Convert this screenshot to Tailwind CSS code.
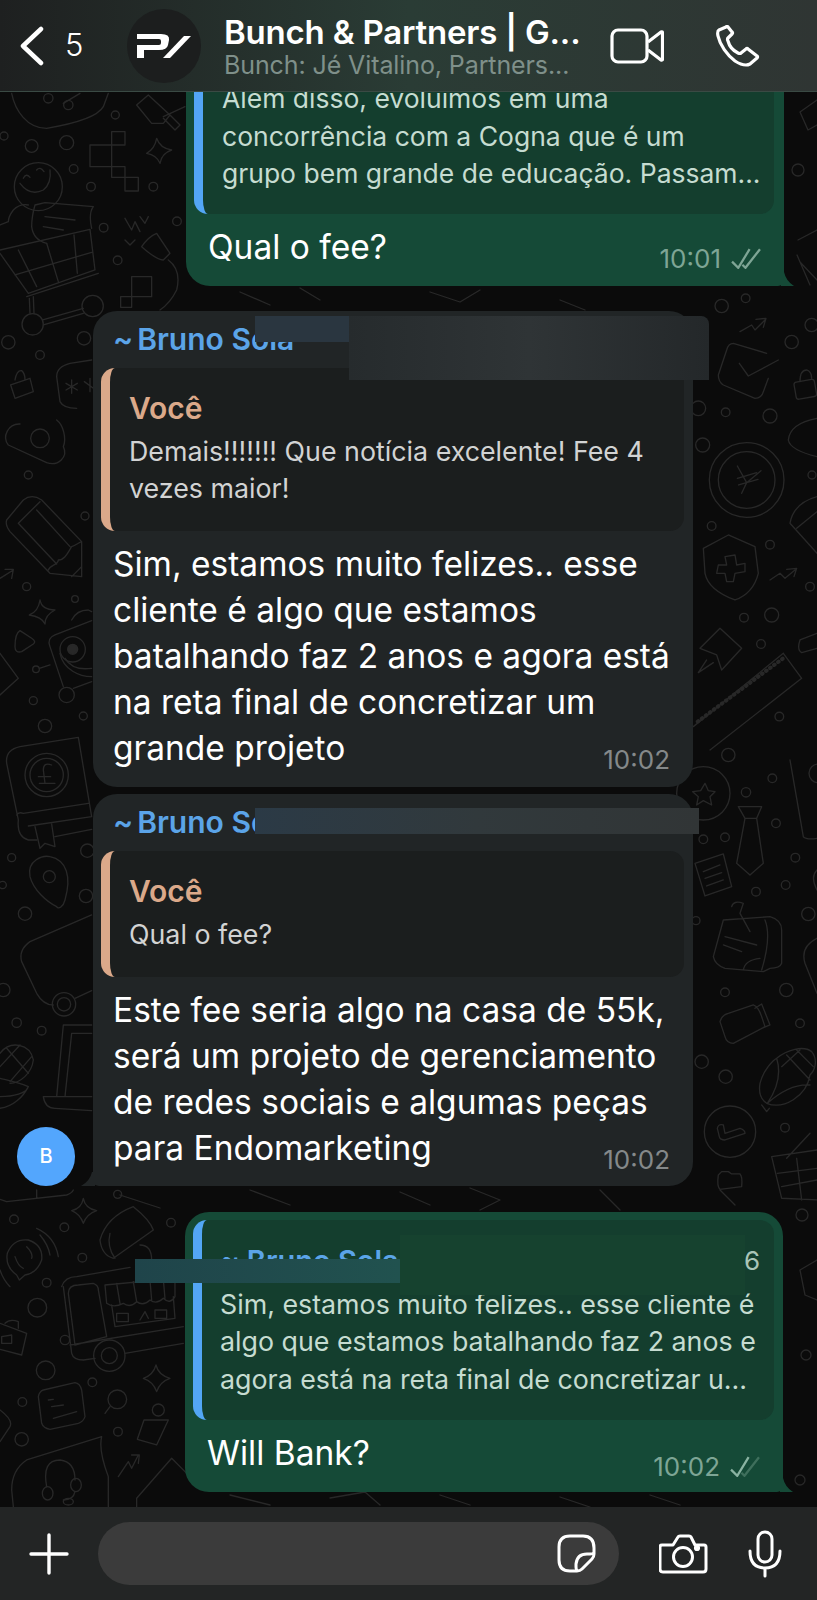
<!DOCTYPE html>
<html lang="pt">
<head>
<meta charset="utf-8">
<script src="https://cdn.jsdelivr.net/npm/@tailwindcss/browser@4"></script>
</head>
<body class="m-0 bg-[#0b0b0b]">
<div class="relative w-[817px] h-[1600px] overflow-hidden flex flex-col bg-[#0b0b0b] font-['Inter','Liberation_Sans',sans-serif] text-white">

  <!-- HEADER -->
  <header class="relative z-20 h-[92px] shrink-0 flex items-center bg-gradient-to-r from-[#1e2020] via-[#2a3c35] to-[#2f3533] border-b border-[#3a4a44]">
    <svg class="ml-[20px] w-[24px] h-[40px]" viewBox="0 0 24 40" fill="none" stroke="#fff" stroke-width="4.500" stroke-linecap="round" stroke-linejoin="round"><path d="M21 3 3 20l18 17"/></svg>
    <span class="ml-[21px] w-[20px] text-[31px] leading-none font-light mt-[-2px]">5</span>
    <div class="ml-[42px] w-[74px] h-[74px] rounded-full bg-[#1c1e1e] flex items-center justify-center">
      <svg class="w-[54px] h-[24px]" viewBox="0 0 54 24" fill="#fff"><path d="M0 0h24q9 0 8 6l-1 5q-1 5-9 5H7v8H0V11h22q2 0 2-2V7q0-2-2-2H0z"/><path d="M26 24 47 2h7L33 24z"/></svg>
    </div>
    <div class="ml-[23px] w-[369px] flex flex-col">
      <span class="text-[33px] leading-[38px] font-semibold whitespace-nowrap tracking-[-0.2px]">Bunch &amp; Partners | G...</span>
      <span class="text-[25px] leading-[28px] text-[#7f908a] whitespace-nowrap tracking-[-0.1px]">Bunch: Jé Vitalino, Partners...</span>
    </div>
    <svg class="ml-[17px] w-[54px] h-[36px]" viewBox="0 0 54 36" fill="none" stroke="#fff" stroke-width="3.200" stroke-linejoin="round"><rect x="2" y="2" width="35" height="32" rx="6"/><path d="M38 14 51 4q1.500-.6 1.500 1v26q0 1.500-1.500 1L38 22"/></svg>
    <svg class="ml-[52px] w-[44px] h-[42px]" viewBox="0 0 44 42" fill="none" stroke="#fff" stroke-width="3.200" stroke-linejoin="round"><path d="M10 2 3 5q-2 1-1 6c2 9 9 19 17 25q6 4 11 4 2 0 4-1l7-6q1-1 0-2l-9-7q-1-1-2 0l-5 4q-1 1-3 0C16 25 13 20 12 16q-1-2 0-3l4-4q1-1 0-2l-4-5q-1-1-2 0z"/></svg>
  </header>

  <!-- CHAT -->
  <main class="relative flex-1 overflow-hidden">
    <!-- wallpaper doodles -->
    <svg class="absolute left-0 top-[-92px] w-[817px] h-[1600px]" viewBox="0 0 817 1600" fill="none" stroke="#282828" stroke-linecap="round" stroke-linejoin="round">
      <g transform="translate(0,90) scale(.3333)" stroke-width="4">
        <path d="M35 10C45 60 80 115 140 115 200 105 290 85 310 50L325 10M190 40 240 10"/>
        <circle cx="145" cy="25" r="14"/><circle cx="205" cy="45" r="14"/>
        <circle cx="12" cy="138" r="12"/><circle cx="95" cy="168" r="19"/><circle cx="200" cy="158" r="21"/><circle cx="221" cy="237" r="13"/><circle cx="273" cy="290" r="13"/><circle cx="346" cy="75" r="12"/><circle cx="460" cy="290" r="13"/><circle cx="531" cy="394" r="13"/><circle cx="311" cy="413" r="13"/><circle cx="353" cy="511" r="13"/><circle cx="25" cy="757" r="20"/><circle cx="120" cy="795" r="13"/><circle cx="252" cy="745" r="20"/>
        <path d="M270 165H335V125H375V165H335V230H270ZM335 230H375V262H335ZM375 262H415V303H375Z"/>
        <path d="M470 145Q480 175 515 180 485 190 480 220 470 195 440 190 465 175 470 145Z"/>
        <path d="M410 45 445 15 510 75 490 100 455 100ZM490 80 555 50M490 85 525 120 540 105 510 75"/>
        <circle cx="115" cy="290" r="72"/><path d="M60 280Q90 320 130 300 155 280 150 240M70 265Q78 248 90 262M110 240Q120 228 132 245"/>
        <path d="M85 345Q60 340 40 360 25 380 25 395L0 405M105 345Q95 380 95 410 100 450 140 460M105 345 135 338 280 350Q265 370 275 415M135 380 225 390M130 410 190 420"/>
        <path d="M0 480 270 418 285 540 85 610 0 490M55 480 110 590M140 460 175 575M222 435 232 550M45 555 275 487M80 620 295 550M128 690 250 655M130 705 250 670M88 625 90 670M100 620 102 670"/>
        <circle cx="98" cy="703" r="32"/><circle cx="278" cy="648" r="32"/>
        <path d="M470 430 510 490 490 510Q470 510 425 470 445 440 470 430ZM375 385 395 420 405 395 420 425M420 380 435 400 445 380M375 450 390 465 405 450M505 510Q545 540 530 600 510 640 480 660"/>
        <path d="M395 560H455V620H395ZM362 620H395V652H362Z"/>
        <path d="M32 885 90 865 100 905 45 925ZM45 870Q50 840 65 842 75 850 75 870"/>
        <path d="M275 810 210 820Q170 830 170 860L180 935Q190 955 230 955M215 870V910M198 880 232 900M232 880 198 900M270 865V905M253 875 280 895"/>
      </g>
      <g transform="translate(0,420) scale(.3333)" stroke-width="4">
        <path d="M60 12C25 10 5 50 25 75L140 128C175 140 205 110 190 80 200 55 190 15 170 0"/><circle cx="120" cy="55" r="28"/>
        <circle cx="85" cy="165" r="12"/><circle cx="255" cy="288" r="12"/><circle cx="80" cy="500" r="12"/><circle cx="225" cy="537" r="10"/><circle cx="100" cy="842" r="12"/><circle cx="250" cy="888" r="12"/><circle cx="108" cy="748" r="10"/>
        <path d="M20 300 70 240Q95 220 125 240L245 365V470L150 460 30 335Q15 315 20 300ZM55 310 120 245M55 310 170 432M110 270 210 380M145 450C150 435 175 435 175 420 195 420 205 395 215 380 230 375 240 365 245 365M215 470 245 440"/>
        <path d="M0 475 40 450M15 448H40L35 475"/>
        <path d="M120 540Q125 570 165 570 135 585 135 612 125 590 88 585 115 575 120 540Z"/>
        <path d="M60 632Q45 640 45 680 45 700 65 695L100 672Q110 665 95 655Z"/>
        <path d="M275 602 165 645Q140 655 150 680L190 800M220 805 275 785M180 700C190 750 240 770 275 770M195 715C210 740 240 750 275 745M215 600Q230 570 265 570L275 575M118 745 150 735"/>
        <circle cx="200" cy="825" r="23"/><circle cx="218" cy="688" r="38"/><circle cx="218" cy="688" r="15" fill="#282828"/>
        <path d="M0 700 55 775 0 825"/>
      </g>
      <g transform="translate(0,720) scale(.3333)" stroke-width="4">
        <circle cx="135" cy="18" r="20"/>
        <path d="M60 80 235 52 275 290M60 80Q15 90 20 130L55 300Q50 350 85 360H110M50 285Q55 275 70 280L265 250M105 320 120 385 135 370 165 380 155 312M85 318 275 290M165 350 275 328"/>
        <circle cx="140" cy="165" r="65"/><circle cx="140" cy="165" r="50"/><path d="M155 135Q130 125 130 150L135 190H118M115 170H152M135 190H165"/>
        <circle cx="35" cy="413" r="12"/><circle cx="8" cy="495" r="11"/><circle cx="75" cy="581" r="20"/><circle cx="50" cy="908" r="14"/><circle cx="125" cy="932" r="13"/><circle cx="262" cy="392" r="20"/><circle cx="258" cy="528" r="20"/><circle cx="10" cy="810" r="20"/>
        <path d="M90 470C80 420 130 405 150 410 200 420 215 470 195 540 190 560 175 570 170 560 140 545 100 510 90 470Z"/><circle cx="148" cy="470" r="18"/>
        <path d="M275 585 90 665Q55 690 65 725L110 820Q130 855 160 855M225 835 275 812"/><circle cx="192" cy="853" r="35"/><circle cx="192" cy="853" r="20"/>
        <path d="M190 915H275M190 915 170 1130M215 940H275M215 940 195 1130M130 1130H275M130 1130Q135 1165 165 1165L275 1172"/>
        <path d="M0 1000C30 960 90 970 100 1020 95 1060 60 1090 30 1090M20 985 85 1060M60 975 0 1040M95 1010 30 1085M0 1130C40 1130 80 1120 85 1100 50 1085 20 1080 0 1075M0 1165C40 1160 70 1130 85 1100"/>
      </g>
      <g transform="translate(690,290) scale(.3333)" stroke-width="4">
        <circle cx="95" cy="48" r="20"/><circle cx="167" cy="25" r="13"/><circle cx="305" cy="156" r="20"/><circle cx="107" cy="367" r="13"/><circle cx="240" cy="378" r="21"/><circle cx="38" cy="465" r="21"/><circle cx="25" cy="355" r="22"/><circle cx="366" cy="555" r="12"/><circle cx="65" cy="708" r="13"/><circle cx="240" cy="764" r="13"/><circle cx="360" cy="890" r="13"/><circle cx="245" cy="975" r="21"/><circle cx="162" cy="983" r="13"/><circle cx="213" cy="1062" r="13"/><circle cx="268" cy="1280" r="13"/><circle cx="365" cy="105" r="20"/>
        <path d="M130 160 230 190M130 160Q115 160 110 180L85 255Q85 275 100 285L195 325Q215 325 220 305L235 265M148 220 175 258 265 210"/>
        <path d="M150 125 185 105 195 120 225 90M198 88 228 85 220 112"/>
        <rect x="315" y="272" width="62" height="52" rx="8" transform="rotate(-10 346 298)"/><path d="M330 275Q330 240 350 240 365 245 365 265"/>
        <circle cx="170" cy="570" r="112"/><circle cx="170" cy="570" r="85"/><path d="M213 542 170 578 142 528M170 578 155 610M142 565 200 548M146 585 204 568"/>
        <path d="M40 775 115 735 195 770 205 850Q190 910 135 930 55 900 45 850ZM105 800 135 795 140 825 165 820V845L135 850 130 875H110L105 850H80L85 825H110Z"/>
        <path d="M240 870 270 850 285 865 315 840M290 838 320 835 312 860"/>
        <path d="M90 1015 155 1075 95 1140 80 1095 30 1075ZM50 1110 25 1148 70 1118"/>
        <path d="M280 1090 335 1165 60 1380M280 1090 10 1310"/><path d="M278 1106 16 1300" stroke-dasharray="2 13" stroke-width="12"/>
        <path d="M381 385Q300 400 295 450 300 480 381 500M381 620Q310 640 300 700L381 790M320 715 381 665M381 1030 330 1050Q320 1080 335 1088L381 1075"/>
      </g>
      <g transform="translate(690,750) scale(.3333)" stroke-width="4">
        <circle cx="40" cy="130" r="80"/><path d="M45 100 55 122 75 125 60 140 65 165 40 152 20 165 25 140 8 125 32 122Z"/>
        <circle cx="115" cy="15" r="20"/><circle cx="247" cy="85" r="13"/><circle cx="168" cy="127" r="14"/><circle cx="258" cy="220" r="13"/><circle cx="105" cy="262" r="13"/><circle cx="40" cy="268" r="13"/><circle cx="316" cy="323" r="13"/><circle cx="287" cy="405" r="13"/><circle cx="198" cy="425" r="13"/><circle cx="355" cy="492" r="20"/><circle cx="105" cy="727" r="13"/><circle cx="289" cy="720" r="20"/><circle cx="330" cy="820" r="13"/><circle cx="35" cy="935" r="20"/><circle cx="107" cy="980" r="20"/><circle cx="285" cy="1133" r="13"/><circle cx="18" cy="512" r="12"/>
        <path d="M145 170H215L200 205 220 340 180 375 140 340 165 205ZM165 205H200"/>
        <path d="M15 340 100 312 125 410 45 438ZM40 365 90 345M45 385 95 368M50 408 100 390"/>
        <path d="M100 510 240 500Q275 510 275 540V640Q270 655 240 655L220 665 105 655Q75 645 70 620L100 510M105 560 200 585M100 585 155 605M225 510Q245 560 215 660M125 470Q130 450 160 460L150 490 180 545M160 660Q165 630 210 625"/>
        <path d="M115 790 190 765Q205 770 215 800L225 830 130 880Q110 880 105 860L90 815Q95 795 115 790ZM195 775 215 762 240 825 215 835"/>
        <path d="M210 1000C220 960 250 930 260 925 290 900 340 885 365 905 385 930 375 960 360 975 350 1040 280 1080 230 1060 215 1050 205 1030 210 1000ZM215 1065 230 1085 238 1075M260 925Q280 990 232 1060M360 1005Q300 1000 232 1060M290 915 360 990M320 900 370 950M275 950 330 900"/>
        <circle cx="120" cy="1145" r="77"/><path d="M82 1135Q85 1120 100 1125L105 1150 150 1135Q165 1140 165 1150L105 1170Q90 1170 88 1160Z"/>
        <path d="M95 1265H115L125 1272H150Q158 1280 155 1310L90 1318Q80 1310 85 1275Z"/>
        <path d="M245 1220 381 1200M245 1220 275 1345 381 1350M290 1225 360 1150M275 1310 381 1290M320 1225 335 1350M262 1270 381 1255"/>
        <path d="M300 30 340 260Q350 270 381 265M381 360Q360 380 381 420M381 565Q330 590 345 640L381 730"/><circle cx="385" cy="70" r="28"/>
      </g>
      <g transform="translate(0,1190) scale(.3333)" stroke-width="4">
        <path d="M0 28 20 35 200 15Q215 10 220 0M110 0V25"/>
        <path d="M250 25Q255 55 290 62 260 72 250 100 240 72 215 62 245 55 250 25Z"/>
        <circle cx="42" cy="88" r="13"/><circle cx="193" cy="112" r="13"/><circle cx="247" cy="203" r="13"/><circle cx="140" cy="278" r="13"/><circle cx="353" cy="13" r="12"/><circle cx="513" cy="98" r="13"/><circle cx="112" cy="353" r="28"/><circle cx="137" cy="541" r="28"/><circle cx="277" cy="577" r="13"/><circle cx="67" cy="636" r="13"/><circle cx="65" cy="748" r="20"/><circle cx="354" cy="725" r="13"/>
        <path d="M50 255Q15 230 22 190 40 145 85 150 130 165 125 210 110 250 75 255L58 270ZM110 115Q165 140 175 200M120 135Q145 165 150 195M0 240Q10 270 30 290M45 200Q55 230 70 235M80 170Q100 190 95 205"/>
        <path d="M300 150Q320 80 400 50 450 90 460 120L340 205Q305 195 300 150ZM330 130Q320 170 345 205M420 165Q455 165 455 210"/>
        <path d="M185 290Q195 260 230 260L390 232M190 290 215 490Q220 510 250 510L285 505M205 310Q205 285 235 285L280 280Q295 285 295 300L320 440 225 465ZM210 465 550 410M375 490 550 460M315 285 525 265V320Q510 345 490 325 470 345 450 330 430 350 410 335 390 355 370 340 340 355 320 340ZM335 345 345 410 525 385 520 320M350 280 360 340M400 275 410 335M450 270 455 330M490 268 495 325M350 370H385V395H350ZM420 390 435 365 445 385M465 360H500V385H465Z"/>
        <circle cx="328" cy="497" r="47"/><circle cx="328" cy="497" r="24"/><circle cx="195" cy="450" r="14"/>
        <path d="M0 400 80 430 65 495 0 478M15 400Q30 385 55 395V415M5 440 35 435V460H5Z"/>
        <path d="M130 600 225 578Q240 580 245 600L255 680Q250 695 235 700L150 718Q130 715 125 700L115 620Q118 605 130 600ZM145 630 160 628M155 650 190 645M160 685 230 665"/>
        <circle cx="352" cy="628" r="28"/><path d="M330 650 315 670"/>
        <path d="M468 525Q475 555 510 565 480 575 470 605 460 575 430 565 460 555 468 525Z"/>
        <path d="M432 690 505 690 470 765 412 748Z"/><circle cx="475" cy="660" r="18"/>
        <path d="M305 740 80 810Q35 840 35 900L40 950M305 740Q295 780 325 860V950M140 890Q125 810 180 810 225 815 225 870M225 905Q220 930 190 930"/>
        <ellipse cx="143" cy="910" rx="16" ry="20"/><ellipse cx="228" cy="885" rx="16" ry="20"/><ellipse cx="205" cy="935" rx="15" ry="10"/>
        <path d="M355 860 385 815 395 835 415 795M395 795H418L415 820M0 660Q40 690 30 710L0 755M410 950V925L515 805 570 860"/>
      </g>
      <g stroke-width="1.300">
        <path d="M817 100 800 112 808 130 817 125M798 240 817 230M800 262 817 280M797 255 810 285M817 1260 800 1270 805 1295 817 1300"/>
        <circle cx="802" cy="1215" r="6"/><circle cx="798" cy="170" r="6"/><circle cx="806" cy="1355" r="5"/><circle cx="800" cy="1480" r="5"/>
        <path d="M300 288 320 300M430 292 460 302 480 290M560 300 585 310M240 292 270 305M470 1188 500 1200 480 1210M120 1195 160 1208M250 1190 290 1205M400 1192 430 1205M600 1190 620 1210M720 1190 735 1205M230 1495 270 1505M330 1498 365 1492 380 1505M440 1495 470 1505M560 1497 590 1507M650 1495 680 1505"/>
      </g>
    </svg>

    <div class="relative flex flex-col">
      <!-- Bubble 1 (sent) -->
      <div class="relative mt-[-32px] ml-[186px] w-[598px] rounded-[24px] rounded-br-[6px] bg-[#154a37] pl-[8px] pr-[10px] pt-[8px] pb-[16px]">
        <div class="rounded-[14px] border-l-[9px] border-[#53a6f5] bg-[#143e2e] pl-[19px] pt-[12px] pb-[21px] text-[26.500px] leading-[37.500px] text-[#c6dcd1] whitespace-nowrap">
          Além disso, evoluímos em uma<br>concorrência com a Cogna que é um<br>grupo bem grande de educação. Passam...
        </div>
        <p class="mt-[10px] pl-[14px] text-[33.500px] leading-[46px] whitespace-nowrap">Qual o fee?</p>
        <div class="absolute right-[23px] bottom-[12px] flex items-center gap-[10px]">
          <span class="text-[26px] leading-[30px] text-[#7ea595]">10:01</span>
          <svg class="w-[30px] h-[21px]" viewBox="0 0 29 20" fill="none" stroke="#7ea595" stroke-width="2.200"><path d="M1 13 7 19 18 1M11 16 14 19 28 1"/></svg>
        </div>
        <svg class="absolute right-[-11px] bottom-0 w-[14px] h-[14px]" viewBox="0 0 14 14" fill="#154a37"><path d="M0 0h3q2 9 10 14H0z"/></svg>
      </div>

      <!-- Bubble 2 (received) -->
      <div class="relative mt-[25px] ml-[93px] w-[600px] rounded-[24px] bg-[#212526] pl-[8px] pr-[9px] pb-[16px]">
        <div class="h-[57px] pl-[12px] pt-[10px] text-[30px] leading-[36px] font-semibold text-[#5ba4e8] whitespace-nowrap"><span class="mr-[4px]">~</span>Bruno Sola</div>
        <div class="rounded-[14px] border-l-[9px] border-[#dba98a] bg-[#1b1e1e] pl-[19px] pt-[22px] h-[163px]">
          <div class="text-[30px] leading-[36px] font-semibold text-[#dba98a]">Você</div>
          <div class="mt-[7px] text-[26.800px] leading-[37.500px] text-[#d2d3d3] whitespace-nowrap">Demais!!!!!!! Que notícia excelente! Fee 4<br>vezes maior!</div>
        </div>
        <p class="mt-[10px] pl-[12px] text-[33.500px] leading-[46px] whitespace-nowrap">Sim, estamos muito felizes.. esse<br>cliente é algo que estamos<br>batalhando faz 2 anos e agora está<br>na reta final de concretizar um<br>grande projeto</p>
        <span class="absolute right-[23px] bottom-[12px] text-[26px] leading-[30px] text-[#85898a]">10:02</span>
        <div class="absolute left-[162px] top-[5px] w-[94px] h-[26px] bg-[#2a3640]"></div>
        <div class="absolute left-[256px] top-[5px] w-[360px] h-[64px] rounded-tr-[8px] bg-gradient-to-r from-[#262b2d] via-[#2f3436] to-[#24282a]"></div>
      </div>

      <!-- Bubble 3 (received) -->
      <div class="relative mt-[7px] ml-[93px] w-[600px] rounded-[24px] rounded-bl-[6px] bg-[#212526] pl-[8px] pr-[9px] pb-[15px]">
        <div class="h-[57px] pl-[12px] pr-[15px] pt-[10px] flex justify-between text-[30px] leading-[36px] whitespace-nowrap">
          <span class="font-semibold text-[#5ba4e8]"><span class="mr-[4px]">~</span>Bruno Sola</span>
          <span class="text-[26px] text-[#85898a]">+55 11 00000-0000</span>
        </div>
        <div class="rounded-[14px] border-l-[9px] border-[#dba98a] bg-[#1b1e1e] pl-[19px] pt-[22px] h-[126px]">
          <div class="text-[30px] leading-[36px] font-semibold text-[#dba98a]">Você</div>
          <div class="mt-[7px] text-[26.800px] leading-[37.500px] text-[#d2d3d3]">Qual o fee?</div>
        </div>
        <p class="mt-[10px] pl-[12px] text-[33.500px] leading-[46px] whitespace-nowrap">Este fee seria algo na casa de 55k,<br>será um projeto de gerenciamento<br>de redes sociais e algumas peças<br>para Endomarketing</p>
        <span class="absolute right-[23px] bottom-[11px] text-[26px] leading-[30px] text-[#85898a]">10:02</span>
        <div class="absolute left-[162px] top-[14px] w-[444px] h-[26px] bg-gradient-to-r from-[#2b3a46] via-[#31393c] to-[#313536]"></div>
        <svg class="absolute left-[-12px] bottom-0 w-[14px] h-[14px]" viewBox="0 0 14 14" fill="#212526"><path d="M14 0h-3Q9 9 0 14h14z"/></svg>
        <div class="absolute left-[-76px] bottom-0 w-[58px] h-[59px] rounded-full bg-[#53a6fd] flex items-center justify-center text-[20px] font-medium">B</div>
      </div>

      <!-- Bubble 4 (sent) -->
      <div class="relative mt-[26px] ml-[185px] w-[598px] rounded-[24px] rounded-br-[6px] bg-[#154a37] pl-[8px] pr-[9px] pt-[8px] pb-[16px]">
        <div class="relative rounded-[14px] border-l-[9px] border-[#53a6f5] bg-[#143e2e] pl-[18px] pr-[14px] h-[200px]">
          <div class="h-[66px] pt-[24px] flex justify-between text-[29px] leading-[34px] whitespace-nowrap">
            <span class="font-semibold text-[#5ba4e8]">~ Bruno Sola</span>
            <span class="text-[#a9c4b7] text-[26px]">+55 11 00000-0006</span>
          </div>
          <div class="text-[26.800px] leading-[37.500px] text-[#c6dcd1] whitespace-nowrap">Sim, estamos muito felizes.. esse cliente é<br>algo que estamos batalhando faz 2 anos e<br>agora está na reta final de concretizar u...</div>
        </div>
        <p class="mt-[10px] pl-[14px] text-[33.500px] leading-[46px] whitespace-nowrap">Will Bank?</p>
        <div class="absolute right-[23px] bottom-[10px] flex items-center gap-[10px]">
          <span class="text-[26px] leading-[30px] text-[#7ea595]">10:02</span>
          <svg class="w-[30px] h-[21px]" viewBox="0 0 29 20" fill="none" stroke-width="2.200"><path d="M11 16 14 19 28 1" stroke="#3f6f5c"/><path d="M1 13 7 19 18 1" stroke="#8ab3a2"/></svg>
        </div>
        <svg class="absolute right-[-11px] bottom-0 w-[14px] h-[14px]" viewBox="0 0 14 14" fill="#154a37"><path d="M0 0h3q2 9 10 14H0z"/></svg>
        <div class="absolute left-[-50px] top-[47px] w-[265px] h-[24px] bg-gradient-to-r from-[#1f444a] to-[#21524f]"></div>
        <div class="absolute left-[215px] top-[23px] w-[345px] h-[60px] bg-[#16422f]"></div>
      </div>
    </div>
  </main>

  <!-- FOOTER -->
  <footer class="relative z-20 h-[93px] shrink-0 flex items-center pl-[29px] bg-[#232525]">
    <svg class="w-[40px] h-[42px]" viewBox="0 0 40 42" fill="none" stroke="#fff" stroke-width="3.400" stroke-linecap="round"><path d="M20 2v38M2 21h36"/></svg>
    <div class="ml-[29px] w-[521px] h-[63px] rounded-[32px] bg-[#3b3b3b] flex items-center justify-end pr-[23px]">
      <svg class="w-[39px] h-[39px]" viewBox="0 0 39 39" fill="none" stroke="#fff" stroke-width="3" stroke-linejoin="round"><path d="M13 2h13q11 0 11 12v6q0 3-2 5L25 35q-2 2-5 2h-7Q2 37 2 26V13Q2 2 13 2z"/><path d="M37 19q-1 1-4 1h-3q-10 0-11 10v3q0 2 1 4"/></svg>
    </div>
    <svg class="ml-[40px] w-[50px] h-[40px]" viewBox="0 0 50 40" fill="none" stroke="#fff" stroke-width="3" stroke-linejoin="round"><path d="M3 11h11l5-8q.5-1 2-1h9q1.500 0 2 1l4 8h9q2 0 2 2v22q0 3-3 3H4q-3 0-3-3V13q0-2 2-2z"/><circle cx="24" cy="23" r="9.500"/><circle cx="38" cy="14" r="1.600" fill="#fff"/></svg>
    <svg class="ml-[39px] w-[34px] h-[48px]" viewBox="0 0 34 48" fill="none" stroke="#fff" stroke-width="3" stroke-linecap="round"><rect x="10" y="2" width="14" height="30" rx="7"/><path d="M2 21q0 17 15 17t15-17M17 38v8"/></svg>
  </footer>
</div>
</body>
</html>
